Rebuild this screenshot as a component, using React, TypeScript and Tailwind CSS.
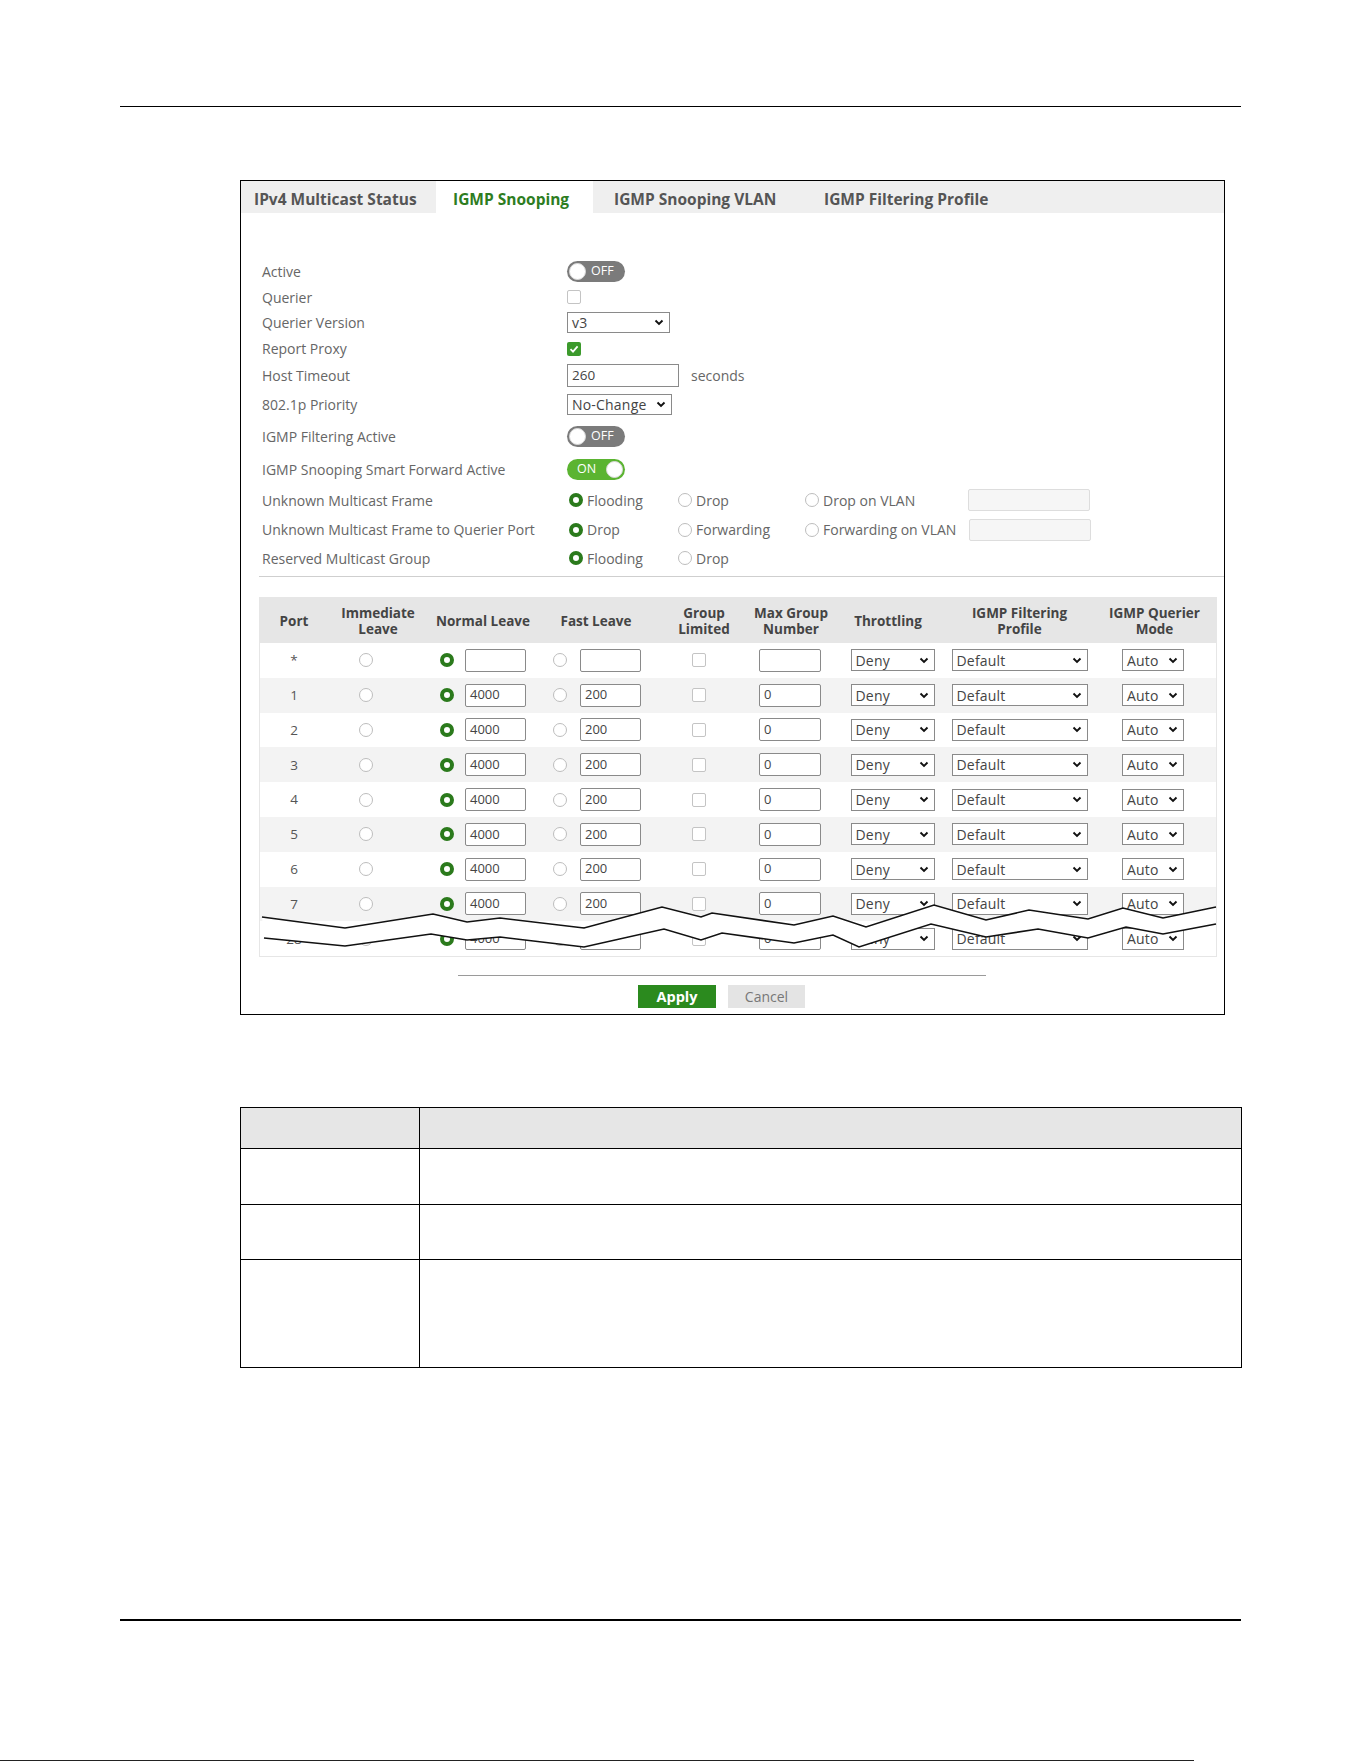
import React from 'react';

function Toggle({ on }: { on: boolean }) {
  return on ? (
    <div className="flex h-[21px] w-[58px] items-center justify-between rounded-full bg-[#5bb431] pl-[10px] pr-[2px]">
      <span className="text-[12.5px] text-white">ON</span>
      <span className="h-[17px] w-[17px] rounded-full border border-[#d9d9d9] bg-white" />
    </div>
  ) : (
    <div className="flex h-[21px] w-[58px] items-center rounded-full bg-[#7b7b7b] pl-[2px]">
      <span className="h-[17px] w-[17px] rounded-full border border-[#d9d9d9] bg-white" />
      <span className="ml-[5px] text-[12.5px] text-white">OFF</span>
    </div>
  );
}

function Check({ on }: { on?: boolean }) {
  return on ? (
    <span className="flex h-[14px] w-[14px] items-center justify-center rounded-[2px] bg-[#3c9a2c]">
      <svg width="10" height="10" viewBox="0 0 10 10">
        <path d="M1.5 5.2 L4 7.6 L8.6 2.4" fill="none" stroke="white" strokeWidth="1.8" />
      </svg>
    </span>
  ) : (
    <span className="block h-[14px] w-[14px] rounded-[2px] border border-[#c4c4c4] bg-white" />
  );
}

function Radio({ on }: { on?: boolean }) {
  return on ? (
    <span className="block h-[14px] w-[14px] shrink-0 rounded-full border-[4px] border-[#2b7a1c] bg-white" />
  ) : (
    <span className="block h-[14px] w-[14px] shrink-0 rounded-full border border-[#bdbdbd] bg-white" />
  );
}

function Chevron() {
  return (
    <svg width="10" height="7" viewBox="0 0 10 7" className="shrink-0">
      <path d="M1.5 1.5 L5 5 L8.5 1.5" fill="none" stroke="#111" strokeWidth="1.9" />
    </svg>
  );
}

function Select({ value, w, h = 21 }: { value: string; w: string; h?: number }) {
  return (
    <div
      className={`flex ${w} items-center justify-between border border-[#8a8a8a] bg-white pl-[4px] pr-[5px] text-[14px] tracking-[0.2px] text-[#444]`}
      style={{ height: h }}
    >
      <span>{value}</span>
      <Chevron />
    </div>
  );
}

function Field({ value, w }: { value: string; w: string }) {
  return (
    <div className={`flex h-[23px] ${w} items-center rounded-[2px] border border-[#8a8a8a] bg-white pl-[4px] text-[13px] text-[#444]`}>
      {value}
    </div>
  );
}

const formRows: { label: string; h: string; control: React.ReactNode }[] = [
  { label: 'Active', h: 'h-[26px]', control: <Toggle on={false} /> },
  { label: 'Querier', h: 'h-[26px]', control: <Check /> },
  { label: 'Querier Version', h: 'h-[25px]', control: <Select value="v3" w="w-[103px]" /> },
  { label: 'Report Proxy', h: 'h-[27px]', control: <Check on /> },
  {
    label: 'Host Timeout',
    h: 'h-[27px]',
    control: (
      <div className="flex items-center">
        <div className="flex h-[23px] w-[112px] items-center border border-[#8a8a8a] pl-[4px] text-[13.5px] text-[#444]">260</div>
        <span className="ml-[12px] text-[#666]">seconds</span>
      </div>
    ),
  },
  { label: '802.1p Priority', h: 'h-[31px]', control: <Select value="No-Change" w="w-[105px]" /> },
  { label: 'IGMP Filtering Active', h: 'h-[33px]', control: <Toggle on={false} /> },
  { label: 'IGMP Snooping Smart Forward Active', h: 'h-[32px]', control: <Toggle on /> },
];

function RadioOpt({ on, label, w }: { on?: boolean; label: string; w: string }) {
  return (
    <div className={`flex ${w} items-center gap-[4px]`}>
      <Radio on={on} />
      <span className="text-[#666]">{label}</span>
    </div>
  );
}

const rows = ['*', '1', '2', '3', '4', '5', '6', '7', '28'];

const cols = 'grid grid-cols-[68px_100px_110px_116px_100px_74px_120px_143px_127px]';

const topPts = '2,319 85,330 173,316 207,324 240,320 324,330 402,309 441,319 452,315 534,327 573,318 606,329 674,307 726,322 769,312 828,321 863,310 903,320 956,309';
const botPts = '4,340 85,348 171,336 207,342 240,339 324,349 404,331 441,342 462,335 534,345 573,337 599,349 671,326 726,339 778,331 828,340 866,329 903,336 956,326';
const fillPts = topPts + ' ' + botPts.split(' ').reverse().join(' ');

export default function App() {
  return (
    <div className="relative h-[1761px] w-[1361px] overflow-hidden bg-white pt-[106px] font-['Open_Sans',sans-serif]">
      <div className="ml-[120px] h-px w-[1121px] bg-black" />

      {/* Panel */}
      <div className="ml-[240px] mt-[73px] h-[835px] w-[985px] border border-black text-[14px]">
        <div className="flex h-[32px] items-stretch bg-[#efefef] text-[15.5px] font-bold text-[#555]">
          <div className="flex w-[195px] items-center pl-[13px] pt-[5px]">IPv4 Multicast Status</div>
          <div className="flex w-[157px] items-center bg-white pl-[17px] pt-[5px] text-[#2e7d1f]">IGMP Snooping</div>
          <div className="flex w-[214px] items-center pl-[21px] pt-[5px]">IGMP Snooping VLAN</div>
          <div className="flex items-center pl-[17px] pt-[5px]">IGMP Filtering Profile</div>
        </div>

        <div className="pl-[21px] pt-[45px]">
          {formRows.map((r) => (
            <div key={r.label} className={`flex ${r.h} items-center`}>
              <div className="w-[305px] text-[#666]">{r.label}</div>
              {r.control}
            </div>
          ))}
          <div className="flex h-[30px] items-center">
            <div className="w-[305px] text-[#666]">Unknown Multicast Frame</div>
            <div className="ml-[2px] flex items-center">
              <RadioOpt on label="Flooding" w="w-[109px]" />
              <RadioOpt label="Drop" w="w-[127px]" />
              <RadioOpt label="Drop on VLAN" w="w-[163px]" />
              <div className="h-[22px] w-[122px] rounded-[2px] border border-[#ddd] bg-[#f6f6f6]" />
            </div>
          </div>
          <div className="flex h-[29px] items-center">
            <div className="w-[305px] text-[#666]">Unknown Multicast Frame to Querier Port</div>
            <div className="ml-[2px] flex items-center">
              <RadioOpt on label="Drop" w="w-[109px]" />
              <RadioOpt label="Forwarding" w="w-[127px]" />
              <RadioOpt label="Forwarding on VLAN" w="w-[164px]" />
              <div className="h-[22px] w-[122px] rounded-[2px] border border-[#ddd] bg-[#f6f6f6]" />
            </div>
          </div>
          <div className="flex h-[28px] items-center">
            <div className="w-[305px] text-[#666]">Reserved Multicast Group</div>
            <div className="ml-[2px] flex items-center">
              <RadioOpt on label="Flooding" w="w-[109px]" />
              <RadioOpt label="Drop" w="w-[127px]" />
            </div>
          </div>
        </div>

        <div className="ml-[18px] mt-[4px] h-px bg-[#cfcfcf]" />

        {/* Port table */}
        <div className="relative ml-[18px] mt-[20px] w-[958px] border border-[#e6e6e6]">
          <div className={`${cols} h-[45px] items-center bg-[#e6e6e6] text-center text-[13.5px] font-bold leading-[16px] text-[#444]`}>
            <div>Port</div>
            <div>Immediate<br />Leave</div>
            <div>Normal Leave</div>
            <div>Fast Leave</div>
            <div>Group<br />Limited</div>
            <div>Max Group<br />Number</div>
            <div>Throttling</div>
            <div>IGMP Filtering<br />Profile</div>
            <div>IGMP Querier<br />Mode</div>
          </div>
          {rows.map((p, i) => (
            <div key={p} className={`${cols} h-[34.8px] items-center ${i % 2 === 1 ? 'bg-[#f3f3f3]' : 'bg-white'}`}>
              <div className="text-center text-[13.5px] text-[#555]">{p}</div>
              <div className="flex justify-center pr-[24px]"><Radio /></div>
              <div className="flex items-center justify-center gap-[11px]">
                <Radio on />
                <Field value={p === '*' ? '' : '4000'} w="w-[61px]" />
              </div>
              <div className="flex items-center justify-center gap-[13px] pl-[2px]">
                <Radio />
                <Field value={p === '*' ? '' : '200'} w="w-[61px]" />
              </div>
              <div className="flex justify-center pr-[11px]"><Check /></div>
              <div className="flex justify-center pr-[2px]">
                <Field value={p === '*' ? '' : '0'} w="w-[62px]" />
              </div>
              <div className="flex justify-center pl-[9px]"><Select value="Deny" w="w-[84px]" h={22} /></div>
              <div className="flex justify-center"><Select value="Default" w="w-[136px]" h={22} /></div>
              <div className="flex justify-center pr-[3px]"><Select value="Auto" w="w-[62px]" h={22} /></div>
            </div>
          ))}
          <svg className="absolute left-0 top-0" width="958" height="360" viewBox="0 0 958 360">
            <polygon points={fillPts} fill="white" />
            <polyline points={topPts} fill="none" stroke="#111" strokeWidth="1.6" />
            <polyline points={botPts} fill="none" stroke="#111" strokeWidth="1.6" />
          </svg>
        </div>

        <div className="ml-[217px] mt-[18px] h-px w-[528px] bg-[#9a9a9a]" />
        <div className="ml-[397px] mt-[9px] flex gap-[12px]">
          <div className="flex h-[23px] w-[78px] items-center justify-center bg-[#2b8a1e] text-[14.5px] font-bold text-white">Apply</div>
          <div className="flex h-[23px] w-[77px] items-center justify-center bg-[#e4e4e4] text-[14px] text-[#777]">Cancel</div>
        </div>
      </div>

      {/* Field description table */}
      <div className="ml-[240px] mt-[92px] w-[1002px] border-[1.5px] border-black">
        <div className="grid h-[40px] grid-cols-[179px_1fr] bg-[#e6e6e6]">
          <div className="border-r-[1.5px] border-black" />
          <div />
        </div>
        <div className="grid h-[56px] grid-cols-[179px_1fr] border-t-[1.5px] border-black">
          <div className="border-r-[1.5px] border-black" />
          <div />
        </div>
        <div className="grid h-[55px] grid-cols-[179px_1fr] border-t-[1.5px] border-black">
          <div className="border-r-[1.5px] border-black" />
          <div />
        </div>
        <div className="grid h-[108px] grid-cols-[179px_1fr] border-t-[1.5px] border-black">
          <div className="border-r-[1.5px] border-black" />
          <div />
        </div>
      </div>

      <div className="ml-[120px] mt-[251px] h-[2px] w-[1121px] bg-black" />
      <div className="absolute bottom-0 left-0 h-px w-[1194px] bg-[#222]" />
    </div>
  );
}
